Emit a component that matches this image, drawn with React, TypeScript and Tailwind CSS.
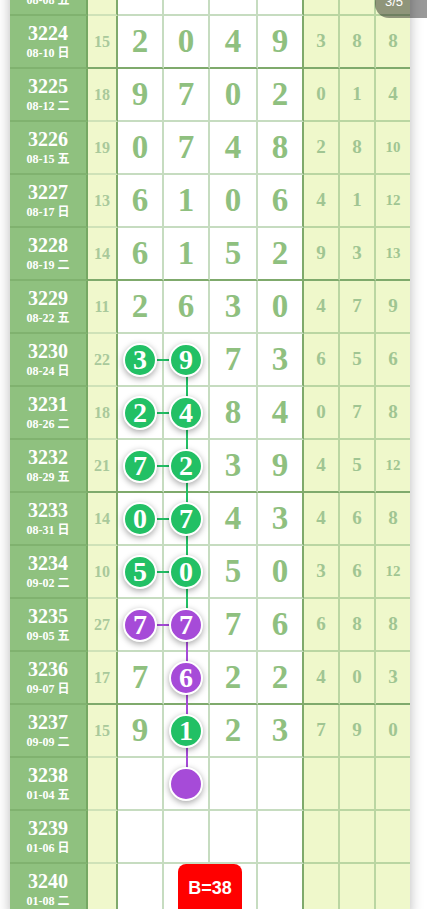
type Row = {
  id: number;
  date: string;
  sum?: number;
  digits?: number[];
  tail?: number[];
};

const ROWS: Row[] = [
  { id: 3223, date: '08-08 五' },
  { id: 3224, date: '08-10 日', sum: 15, digits: [2, 0, 4, 9], tail: [3, 8, 8] },
  { id: 3225, date: '08-12 二', sum: 18, digits: [9, 7, 0, 2], tail: [0, 1, 4] },
  { id: 3226, date: '08-15 五', sum: 19, digits: [0, 7, 4, 8], tail: [2, 8, 10] },
  { id: 3227, date: '08-17 日', sum: 13, digits: [6, 1, 0, 6], tail: [4, 1, 12] },
  { id: 3228, date: '08-19 二', sum: 14, digits: [6, 1, 5, 2], tail: [9, 3, 13] },
  { id: 3229, date: '08-22 五', sum: 11, digits: [2, 6, 3, 0], tail: [4, 7, 9] },
  { id: 3230, date: '08-24 日', sum: 22, digits: [3, 9, 7, 3], tail: [6, 5, 6] },
  { id: 3231, date: '08-26 二', sum: 18, digits: [2, 4, 8, 4], tail: [0, 7, 8] },
  { id: 3232, date: '08-29 五', sum: 21, digits: [7, 2, 3, 9], tail: [4, 5, 12] },
  { id: 3233, date: '08-31 日', sum: 14, digits: [0, 7, 4, 3], tail: [4, 6, 8] },
  { id: 3234, date: '09-02 二', sum: 10, digits: [5, 0, 5, 0], tail: [3, 6, 12] },
  { id: 3235, date: '09-05 五', sum: 27, digits: [7, 7, 7, 6], tail: [6, 8, 8] },
  { id: 3236, date: '09-07 日', sum: 17, digits: [7, 6, 2, 2], tail: [4, 0, 3] },
  { id: 3237, date: '09-09 二', sum: 15, digits: [9, 1, 2, 3], tail: [7, 9, 0] },
  { id: 3238, date: '01-04 五' },
  { id: 3239, date: '01-06 日' },
  { id: 3240, date: '01-08 二' },
];

type Mark = 'g' | 'p';

// circled balls per row: [col1, col2], plus vertical line halves in col2
const BALLS: Record<number, { c1?: Mark; c2?: Mark; empty?: boolean; up?: Mark; down?: Mark }> = {
  3230: { c1: 'g', c2: 'g', down: 'g' },
  3231: { c1: 'g', c2: 'g', up: 'g', down: 'g' },
  3232: { c1: 'g', c2: 'g', up: 'g', down: 'g' },
  3233: { c1: 'g', c2: 'g', up: 'g', down: 'g' },
  3234: { c1: 'g', c2: 'g', up: 'g', down: 'g' },
  3235: { c1: 'p', c2: 'p', up: 'g', down: 'p' },
  3236: { c2: 'p', up: 'p', down: 'p' },
  3237: { c2: 'g', up: 'p', down: 'p' },
  3238: { c2: 'p', empty: true, up: 'p' },
};

const serif = "font-['Liberation_Serif','Noto_Sans_CJK_SC',serif]";

function Ball({ mark, value }: { mark: Mark; value?: number }) {
  return (
    <div
      className={`relative z-10 flex h-[34px] w-[34px] items-center justify-center rounded-full border-2 border-white shadow-[0_2px_6px_rgba(0,0,0,0.35)] ${
        mark === 'g' ? 'bg-[#22c065]' : 'bg-[#a64bd8]'
      }`}
    >
      <span className={`${serif} text-[28px] font-bold leading-none text-white`}>{value}</span>
    </div>
  );
}

function TableRow({ row }: { row: Row }) {
  const thick = (row.id - 3224) % 4 === 0;
  const ball = BALLS[row.id];
  const lineColor = (m?: Mark) => (m === 'p' ? 'bg-[#a64bd8]' : 'bg-[#22c065]');

  return (
    <div className="relative grid h-[53px] grid-cols-[78px_30px_46px_46px_48px_46px_36px_36px_34px]">
      <div className="flex flex-col items-center justify-center border-b-2 border-r-2 border-b-[#80b26f] border-r-[#76a864] bg-[#8fc17f] text-white">
        <span className={`${serif} text-[20px] font-bold leading-[21px]`}>{row.id}</span>
        <span className={`${serif} mt-[2px] text-[12px] font-bold leading-[14px]`}>{row.date}</span>
      </div>
      <div
        className={`flex items-center justify-center border-r-2 border-r-[#7faa6c] bg-[#f0f8cc] ${
          thick ? 'border-b-2 border-b-[#7faa6c]' : 'border-b-2 border-b-[#cfe2b8]'
        }`}
      >
        <span className={`${serif} text-[16px] font-bold text-[#a9c99b]`}>{row.sum}</span>
      </div>
      {[0, 1, 2, 3].map((i) => {
        const v = row.digits?.[i];
        const mark = i === 0 ? ball?.c1 : i === 1 ? ball?.c2 : undefined;
        return (
          <div
            key={i}
            className={`flex items-center justify-center border-r-2 bg-white ${
              i === 3 ? 'border-r-[#7faa6c]' : 'border-r-[#c6dcc0]'
            } ${thick ? 'border-b-2 border-b-[#7faa6c]' : 'border-b-2 border-b-[#c6dcc0]'}`}
          >
            {mark ? (
              <Ball mark={mark} value={ball?.empty ? undefined : v} />
            ) : (
              <span className={`${serif} text-[33px] font-bold leading-none text-[#8fc07f]`}>{v}</span>
            )}
          </div>
        );
      })}
      {[0, 1, 2].map((i) => {
        const v = row.tail?.[i];
        return (
          <div
            key={i}
            className={`flex items-center justify-center bg-[#eff8cb] ${
              i === 2 ? '' : 'border-r-2 border-r-[#bad6a2]'
            } ${thick ? 'border-b-2 border-b-[#7faa6c]' : 'border-b-2 border-b-[#bad6a2]'}`}
          >
            <span
              className={`${serif} font-bold text-[#a0c592] ${
                v !== undefined && v >= 10 ? 'text-[15px]' : 'text-[19px]'
              }`}
            >
              {v}
            </span>
          </div>
        );
      })}

      {/* connectors */}
      {ball?.c1 && (
        <div className={`absolute left-[146px] top-[25px] h-[2px] w-[18px] ${lineColor(ball.c1)}`} />
      )}
      {ball?.up && <div className={`absolute left-[176px] top-0 h-[27px] w-[2px] ${lineColor(ball.up)}`} />}
      {ball?.down && (
        <div className={`absolute left-[176px] top-[26px] h-[27px] w-[2px] ${lineColor(ball.down)}`} />
      )}

      {row.id === 3240 && (
        <div className="absolute left-[168px] top-0 z-20 flex h-[52px] w-[64px] items-start justify-center rounded-[8px] bg-[#ff0000] pt-[11px]">
          <span className="font-['Liberation_Sans',Arial,sans-serif] text-[18px] font-bold text-white">B=38</span>
        </div>
      )}
    </div>
  );
}

export default function App() {
  return (
    <div className="relative h-[909px] w-[427px] overflow-hidden bg-white">
      <div className="mx-[10px] mt-[-37px] w-[400px] shadow-[0_0_12px_rgba(0,0,0,0.28)]">
        {ROWS.map((row) => (
          <TableRow key={row.id} row={row} />
        ))}
      </div>

      <div className="absolute right-[-14px] top-[-12px] z-30 flex h-[30px] w-[66px] items-end rounded-[14px] bg-black/40 pb-[10px] pl-[10px]">
        <span className="font-['Liberation_Sans',Arial,sans-serif] text-[13px] leading-none text-white">3/5</span>
      </div>
    </div>
  );
}
